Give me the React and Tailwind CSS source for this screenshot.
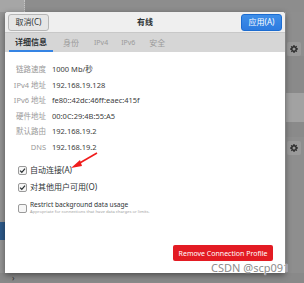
import React from 'react';

const rows = [
    ['链路速度', '1000 Mb/秒'],
    ['IPv4 地址', '192.168.19.128'],
    ['IPv6 地址', 'fe80::42dc:46ff:eaec:415f'],
    ['硬件地址', '00:0C:29:4B:55:A5'],
    ['默认路由', '192.168.19.2'],
    ['DNS', '192.168.19.2'],
];

const Gear = () => (
    <svg width="8" height="8" viewBox="0 0 16 16" fill="#2e2e2e">
        <path d="M7 0h2l.4 2.2 1.5.6L12.7 1.5l1.4 1.4-1.3 1.8.6 1.5L16 7v2l-2.2.4-.6 1.5 1.3 1.8-1.4 1.4-1.8-1.3-1.5.6L9 16H7l-.4-2.2-1.5-.6-1.8 1.3-1.4-1.4 1.3-1.8-.6-1.5L0 9V7l2.2-.4.6-1.5-1.3-1.8 1.4-1.4 1.8 1.3 1.5-.6zM8 5a3 3 0 100 6 3 3 0 000-6z" />
    </svg>
);

const Check = ({ checked }) => (
    <span className="flex h-[9px] w-[9px] items-center justify-center rounded-[2px] border border-[#9a9a9a] bg-[#f6f6f6]">
        {checked && (
            <svg width="7" height="7" viewBox="0 0 10 10">
                <path d="M1.5 5.2 4 7.6 8.6 2.2" fill="none" stroke="#2e3436" strokeWidth="1.8" />
            </svg>
        )}
    </span>
);

export default function App() {
    return (
        <div
            className="relative h-[283px] w-[304px] overflow-hidden bg-[#8b8b8b]"
            style={{ fontFamily: '"Noto Sans", "Noto Sans CJK SC", sans-serif' }}
        >
            {/* dimmed settings window behind the dialog */}
            <div className="flex h-[12px]">
                <div className="w-[25px] border-r border-dotted border-[#c4c4c4] bg-[#a6a6a6]" />
                <div className="flex-1 bg-[#8d8d8d]" />
            </div>
            <div className="flex h-[261px]">
                <div className="flex w-[5px] flex-col bg-[#959595]">
                    <div className="h-[210px]" />
                    <div className="h-[18px] bg-[#2d5a8a]" />
                </div>
                <div className="flex-1" />
                <div className="flex w-[19px] flex-col border-l border-[#a2a2a2] bg-[#8e8e8e]">
                    <div className="h-[30px]" />
                    <div className="ml-[1px] flex h-[14px] w-[14px] items-center justify-center rounded-[2px] bg-[#9a9a9a]">
                        <Gear />
                    </div>
                    <div className="h-[37px] bg-[#8a8a8a]" />
                    <div className="h-[29px] bg-[#a2a2a2]" />
                    <div className="h-[15px] bg-[#8a8a8a]" />
                    <div className="ml-[1px] mt-[4px] flex h-[14px] w-[14px] items-center justify-center rounded-[2px] bg-[#9a9a9a]">
                        <Gear />
                    </div>
                </div>
            </div>
            <div className="flex h-[10px] items-center bg-[#898989] pl-[12px] text-[8px] leading-none text-[#2e2e2e]">
                ›
            </div>

            {/* dialog */}
            <div className="absolute left-[5px] top-[12px] flex h-[261px] w-[280px] flex-col overflow-hidden rounded-t-[3px] bg-white shadow-[0_2px_6px_rgba(0,0,0,0.45)]">
                <div className="flex h-[21px] items-center justify-between border-b border-[#c8c8c8] bg-[#efefef] px-[3px]">
                    <button className="flex h-[17px] w-[41px] items-center justify-center rounded-[3px] border border-[#b6b6b6] bg-[#e6e6e6] text-[8px] leading-none text-[#2e3436]">
                        取消(C)
                    </button>
                    <span className="text-[8px] font-bold leading-none text-[#2e3436]">有线</span>
                    <button className="flex h-[17px] w-[41px] items-center justify-center rounded-[3px] border border-[#1c6cd0] bg-[linear-gradient(#3e8ee8,#2d7be0)] text-[8px] leading-none text-white">
                        应用(A)
                    </button>
                </div>
                <div className="flex h-[19px] items-stretch bg-[#d6d6d6] pl-[4px] text-[8px] leading-none text-[#9a9a9a]">
                    <div className="flex items-center border-b-2 border-[#3584e4] px-[6px] font-bold text-[#2e3436]">
                        详细信息
                    </div>
                    <div className="ml-[10px] flex items-center">身份</div>
                    <div className="ml-[15px] flex items-center text-[7px]">IPv4</div>
                    <div className="ml-[13px] flex items-center text-[7px]">IPv6</div>
                    <div className="ml-[14px] flex items-center">安全</div>
                </div>

                <div className="flex flex-col gap-[6.5px] pt-[13px]">
                    {rows.map(([k, v]) => (
                        <div key={k} className="flex items-center text-[7.5px] leading-[9px]">
                            <span className="w-[41px] text-right text-[#9a9a9a]">{k}</span>
                            <span className="ml-[6px] text-[#3d3d3d]">{v}</span>
                        </div>
                    ))}
                </div>

                <div className="mt-[14px] flex flex-col pl-[13px] text-[8px] leading-none text-[#2e3436]">
                    <div className="flex items-center gap-[3px]">
                        <Check checked />
                        <span>自动连接(A)</span>
                    </div>
                    <div className="mt-[8px] flex items-center gap-[3px]">
                        <Check checked />
                        <span>对其他用户可用(O)</span>
                    </div>
                    <div className="mt-[8px] flex items-start gap-[3px]">
                        <div className="mt-[4px]">
                            <Check />
                        </div>
                        <div className="flex flex-col">
                            <span className="text-[6.6px] leading-[9px]">Restrict background data usage</span>
                            <span className="text-[4.2px] leading-[6px] text-[#a0a0a0]">
                                Appropriate for connections that have data charges or limits.
                            </span>
                        </div>
                    </div>
                </div>

                <div className="mt-auto flex justify-end pb-[12px] pr-[12px]">
                    <button className="flex h-[16px] w-[100px] items-center justify-center rounded-[2px] bg-[#e31b23] text-[7px] leading-none text-white">
                        Remove Connection Profile
                    </button>
                </div>
            </div>

            {/* annotation arrow */}
            <svg className="absolute left-0 top-0" width="304" height="283">
                <line x1="97" y1="153" x2="78" y2="164" stroke="#f01c1c" strokeWidth="1.6" />
                <path d="M71 168 L80 160 L82 166 Z" fill="#f01c1c" />
            </svg>

            {/* watermark */}
            <div
                className="absolute left-[211px] top-[262px] text-[11px] leading-none text-[#8c8c8c]"
                style={{ textShadow: '0 0 1px #fff, 0 0 1px #fff' }}
            >
                CSDN @scp091
            </div>
        </div>
    );
}
